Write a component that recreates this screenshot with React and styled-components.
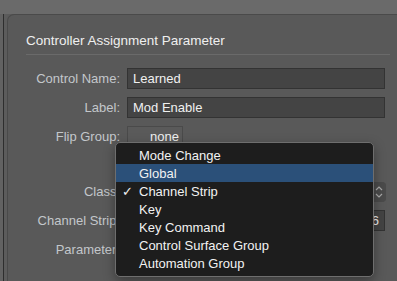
import React from 'react';
import styled, { createGlobalStyle } from 'styled-components';

const GlobalStyle = createGlobalStyle`
  html, body {
    margin: 0;
    padding: 0;
    background: #5b5b5b;
    font-family: "Liberation Sans", Arial, sans-serif;
    font-size: 13px;
    overflow: hidden;
  }
`;

const menuItems = [
  { label: 'Mode Change' },
  { label: 'Global', active: true },
  { label: 'Channel Strip', checked: true },
  { label: 'Key' },
  { label: 'Key Command' },
  { label: 'Control Surface Group' },
  { label: 'Automation Group' },
];

const App = () => {
  return (
    <>
      <GlobalStyle />
      <Window>
        <TopStrip />
        <Body>
          <Gutter />
          <Panel>
            <Heading>Controller Assignment Parameter</Heading>
            <Form>
              <Row>
                <Label>Control Name:</Label>
                <Field>Learned</Field>
              </Row>
              <Row>
                <Label>Label:</Label>
                <Field>Mod Enable</Field>
              </Row>
              <Row>
                <Label>Flip Group:</Label>
                <PopupButton>none</PopupButton>
              </Row>
              <Row $spaced>
                <Label>Class:</Label>
                <Popup>
                  <Stepper>
                    <svg width="8" height="14" viewBox="0 0 8 14">
                      <path d="M1 5 L4 2 L7 5 M1 9 L4 12 L7 9" fill="none" stroke="#a9a9a9" strokeWidth="1.2" />
                    </svg>
                  </Stepper>
                </Popup>
              </Row>
              <Row>
                <Label>Channel Strip:</Label>
                <Field $right>1.6</Field>
              </Row>
              <Row>
                <Label>Parameter:</Label>
              </Row>
            </Form>

            <Menu>
              {menuItems.map((item) => (
                <MenuItem key={item.label} $active={item.active}>
                  <Check>{item.checked ? '✓' : ''}</Check>
                  {item.label}
                </MenuItem>
              ))}
            </Menu>
          </Panel>
        </Body>
      </Window>
    </>
  );
};

const Window = styled.div`
  width: 397px;
  height: 281px;
  display: flex;
  flex-direction: column;
  position: relative;
`;

const TopStrip = styled.div`
  height: 14px;
  background: #6a6a6a;
  flex-shrink: 0;
`;

const Body = styled.div`
  flex: 1;
  display: flex;
`;

const Gutter = styled.div`
  width: 7px;
  flex-shrink: 0;
  background: #5c5c5c;
  box-sizing: border-box;
  border-left: 3px solid #626262;
  position: relative;

  &::before {
    content: '';
    position: absolute;
    left: 0;
    top: 0;
    bottom: 0;
    width: 1px;
    background: #2e2e2e;
  }
`;

const Panel = styled.div`
  flex: 1;
  position: relative;
  background: #595959;
  border-top: 1px solid #4a4a4a;
  border-left: 1px solid #4a4a4a;
  border-top-left-radius: 7px;
  padding: 18px 7px 0 18px;
`;

const Heading = styled.div`
  color: #efefef;
  font-size: 13.5px;
  line-height: 16px;
  padding-bottom: 5px;
  border-bottom: 1px solid #6a6a6a;
`;

const Form = styled.div`
  display: flex;
  flex-direction: column;
  gap: 8px;
  margin-top: 13px;
`;

const Row = styled.div`
  display: flex;
  align-items: center;
  height: 21px;
  margin-top: ${(p) => (p.$spaced ? '26px' : '0')};
`;

const Label = styled.div`
  width: 94px;
  flex-shrink: 0;
  text-align: right;
  color: #c3c7cb;
  padding-right: 7px;
`;

const Field = styled.div`
  box-sizing: border-box;
  width: 258px;
  height: 21px;
  background: #444444;
  border: 1px solid #333333;
  color: #f0f0f0;
  padding: 0 5px;
  line-height: 19px;
  text-align: ${(p) => (p.$right ? 'right' : 'left')};
  white-space: nowrap;
  overflow: hidden;
`;

const PopupButton = styled.div`
  box-sizing: border-box;
  width: 56px;
  height: 21px;
  background: #5a5a5a;
  border: 1px solid #4a4a4a;
  color: #f0f0f0;
  padding-left: 22px;
  line-height: 19px;
`;

const Popup = styled.div`
  box-sizing: border-box;
  width: 259px;
  height: 20px;
  display: flex;
  justify-content: flex-end;
  background: #555555;
  border-radius: 4px;
`;

const Stepper = styled.div`
  width: 14px;
  height: 20px;
  display: flex;
  align-items: center;
  justify-content: center;
  background: #4b4b4b;
  border-radius: 0 4px 4px 0;
`;

const Menu = styled.div`
  position: absolute;
  left: 107px;
  top: 127px;
  width: 259px;
  box-sizing: border-box;
  padding: 3px 0 4px;
  background: #1d1d1d;
  border: 1px solid #6e6e6e;
  border-radius: 5px;
  box-shadow: 0 4px 12px rgba(0, 0, 0, 0.35);
`;

const MenuItem = styled.div`
  height: 18px;
  display: flex;
  align-items: center;
  color: #f2f2f2;
  font-size: 13px;
  background: ${(p) => (p.$active ? '#2b5079' : 'transparent')};
`;

const Check = styled.span`
  width: 23px;
  padding-left: 6px;
  box-sizing: border-box;
  font-size: 13px;
  font-family: "DejaVu Sans", sans-serif;
`;

export default App;
